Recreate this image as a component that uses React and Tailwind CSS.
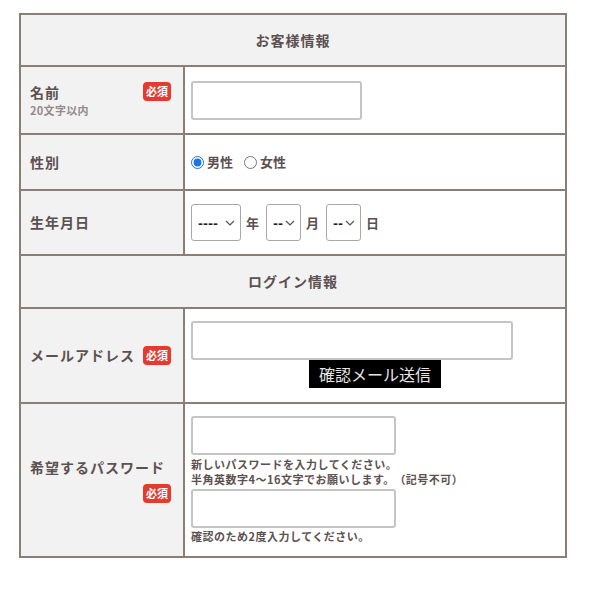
import React from "react";

const B = "border-[#8c7e74]";
const font = { fontFamily: '"Noto Sans CJK JP", "Noto Sans", sans-serif' };

function Badge() {
  return (
    <span className="inline-flex items-center justify-center w-[28px] h-[19px] rounded-[4px] bg-[#e53b2c] text-white text-[11px] font-bold leading-none shrink-0">
      必須
    </span>
  );
}

function Chevron() {
  return (
    <svg width="10" height="6" viewBox="0 0 10 6" fill="none" stroke="#555" strokeWidth="1.2">
      <path d="M1 1l4 4 4-4" />
    </svg>
  );
}

function Select({ w, text }) {
  return (
    <div className={`${w} h-[37px] border border-[#a8a8a8] rounded-[3px] bg-white flex items-center justify-between pl-[6px] pr-[5px]`}>
      <span className="text-[13px] font-black text-[#222] leading-none">{text}</span>
      <Chevron />
    </div>
  );
}

function Input({ w }) {
  return <div className={`${w} h-[39px] border-2 border-[#c4c4c4] rounded-[3px] bg-white`} />;
}

export default function App() {
  return (
    <div className="pt-[13px] pl-[19px] bg-white min-h-[600px] text-[#5c5050]" style={font}>
      <div className={`w-[548px] border-t-2 border-l-2 ${B}`}>
        <div className={`h-[52px] bg-[#f2f2f2] border-r-2 border-b-2 ${B} flex items-center justify-center text-[14px] font-bold tracking-[1px]`}>
          お客様情報
        </div>

        <div className="flex h-[68px]">
          <div className={`w-[164px] bg-[#f2f2f2] border-r-2 border-b-2 ${B} pl-[9px] pr-[12px] flex items-start justify-between pt-[15px]`}>
            <div className="flex flex-col">
              <span className="text-[14px] font-bold tracking-[1px] leading-[20px]">名前</span>
              <span className="text-[11px] text-[#948a8a] font-bold leading-[16px] tracking-[0.3px]">20文字以内</span>
            </div>
            <Badge />
          </div>
          <div className={`flex-1 border-r-2 border-b-2 ${B} flex items-center pl-[6px]`}>
            <Input w="w-[171px]" />
          </div>
        </div>

        <div className="flex h-[56px]">
          <div className={`w-[164px] bg-[#f2f2f2] border-r-2 border-b-2 ${B} pl-[9px] flex items-center text-[14px] font-bold tracking-[1px]`}>
            性別
          </div>
          <div className={`flex-1 border-r-2 border-b-2 ${B} flex items-center pl-[6px] text-[13px] font-bold`}>
            <label className="flex items-center gap-[3px]">
              <input type="radio" name="sex" defaultChecked className="m-0 w-[13px] h-[13px] accent-[#1a73e8]" />
              <span>男性</span>
            </label>
            <label className="flex items-center gap-[3px] ml-[11px]">
              <input type="radio" name="sex" className="m-0 w-[13px] h-[13px]" />
              <span>女性</span>
            </label>
          </div>
        </div>

        <div className="flex h-[65px]">
          <div className={`w-[164px] bg-[#f2f2f2] border-r-2 border-b-2 ${B} pl-[9px] flex items-center text-[14px] font-bold tracking-[1px]`}>
            生年月日
          </div>
          <div className={`flex-1 border-r-2 border-b-2 ${B} flex items-center pl-[6px] text-[13px] font-bold`}>
            <Select w="w-[50px]" text="----" />
            <span className="ml-[5px] mr-[7px]">年</span>
            <Select w="w-[35px]" text="--" />
            <span className="ml-[5px] mr-[7px]">月</span>
            <Select w="w-[35px]" text="--" />
            <span className="ml-[5px]">日</span>
          </div>
        </div>

        <div className={`h-[53px] bg-[#f2f2f2] border-r-2 border-b-2 ${B} flex items-center justify-center text-[14px] font-bold tracking-[1px]`}>
          ログイン情報
        </div>

        <div className="flex h-[95px]">
          <div className={`w-[164px] bg-[#f2f2f2] border-r-2 border-b-2 ${B} pl-[9px] pr-[12px] flex items-center justify-between`}>
            <span className="text-[14px] font-bold tracking-[1px]">メールアドレス</span>
            <Badge />
          </div>
          <div className={`flex-1 border-r-2 border-b-2 ${B} pl-[6px] pt-[12px]`}>
            <Input w="w-[322px]" />
            <div className="ml-[118px] w-[132px] h-[28px] bg-black text-[#e6e6e6] text-[16px] leading-[28px] text-center">
              確認メール送信
            </div>
          </div>
        </div>

        <div className="flex h-[154px]">
          <div className={`w-[164px] bg-[#f2f2f2] border-r-2 border-b-2 ${B} pl-[9px] pr-[12px] flex flex-col justify-center`}>
            <span className="text-[14px] font-bold tracking-[1px] leading-[18px]">希望するパスワード</span>
            <div className="self-end mt-[3px]"><Badge /></div>
          </div>
          <div className={`flex-1 border-r-2 border-b-2 ${B} pl-[6px] pt-[12px] text-[11px] font-bold leading-[15px] tracking-[0.5px]`}>
            <Input w="w-[205px]" />
            <div className="mt-[2px]">新しいパスワードを入力してください。</div>
            <div className="whitespace-nowrap">半角英数字4〜16文字でお願いします。<span className="ml-[5px]">（記号不可）</span></div>
            <div className="mt-[2px]"><Input w="w-[205px]" /></div>
            <div className="mt-[1px]">確認のため2度入力してください。</div>
          </div>
        </div>
      </div>
    </div>
  );
}
